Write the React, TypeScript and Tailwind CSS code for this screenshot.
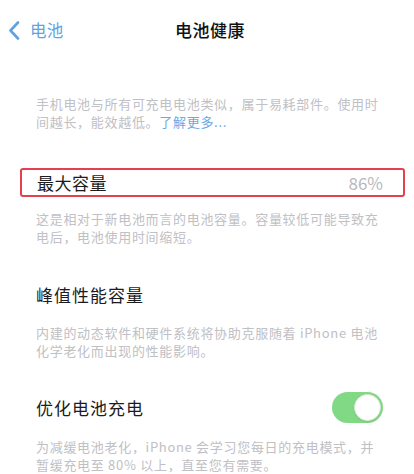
import { ReactNode } from 'react';

const font = { fontFamily: '"Noto Sans CJK SC", "Noto Sans", sans-serif' };

const Note = ({ children }: { children: ReactNode }) => (
  <p className="pl-[36px] pr-4 text-[13px] leading-[18px] tracking-[0.7px] text-[#c0c0c5] whitespace-nowrap">
    {children}
  </p>
);

const Toggle = ({ on }: { on: boolean }) => (
  <div
    className={
      on
        ? 'w-[51px] h-[31px] rounded-full bg-[#82d985] p-[2px] flex justify-end'
        : 'w-[51px] h-[31px] rounded-full bg-[#e5e5ea] p-[2px] flex justify-start'
    }
  >
    <div className="w-[27px] h-[27px] rounded-full bg-white border border-[#d6ecd6] shadow-[0_1px_2px_rgba(0,0,0,0.08)]" />
  </div>
);

const App = () => {
  return (
    <div className="w-[414px] h-[474px] bg-white overflow-hidden" style={font}>
      {/* nav bar */}
      <div className="relative h-[60px] flex items-center">
        <div className="flex items-center pl-[8px] gap-[10px] text-[#5ea2e4]">
          <svg width="12" height="19" viewBox="0 0 12 19" fill="none">
            <path
              d="M10 1.5 L2.5 9.5 L10 17.5"
              stroke="#5ea2e4"
              strokeWidth="2.6"
              strokeLinecap="round"
              strokeLinejoin="round"
            />
          </svg>
          <span className="text-[16.5px] tracking-[0.3px]">电池</span>
        </div>
        <div className="absolute left-0 right-0 text-center pl-[6px] text-[17px] font-medium tracking-[0.5px] text-[#111]">
          电池健康
        </div>
      </div>

      <div className="pt-[35px]">
        <Note>
          手机电池与所有可充电电池类似，属于易耗部件。使用时
          <br />
          间越长，能效越低。<span className="text-[#6aa8e6]">了解更多...</span>
        </Note>
      </div>

      {/* max capacity */}
      <div className="mt-[37px] ml-[20px] mr-[9px] h-[29px] border-2 border-[#e4404f] rounded-[3px] flex items-center justify-between pl-[15px] pr-[20px]">
        <span className="text-[17px] tracking-[0.5px] text-[#1c1c1e]">最大容量</span>
        <span className="text-[17px] text-[#b8b8bd]">86%</span>
      </div>

      <div className="mt-[13px]">
        <Note>
          这是相对于新电池而言的电池容量。容量较低可能导致充
          <br />
          电后，电池使用时间缩短。
        </Note>
      </div>

      {/* peak performance */}
      <div className="mt-[34px] h-[30px] pl-[36px] flex items-center">
        <span className="text-[17px] tracking-[1px] text-[#1c1c1e]">峰值性能容量</span>
      </div>

      <div className="mt-[14px]">
        <Note>
          内建的动态软件和硬件系统将协助克服随着 iPhone 电池
          <br />
          化学老化而出现的性能影响。
        </Note>
      </div>

      {/* optimized charging */}
      <div className="mt-[32px] h-[31px] pl-[36px] pr-[31px] flex items-center justify-between">
        <span className="text-[17px] tracking-[1px] text-[#1c1c1e]">优化电池充电</span>
        <Toggle on />
      </div>

      <div className="mt-[15px]">
        <Note>
          为减缓电池老化，iPhone 会学习您每日的充电模式，并
          <br />
          暂缓充电至 80% 以上，直至您有需要。
        </Note>
      </div>
    </div>
  );
};

export default App;
